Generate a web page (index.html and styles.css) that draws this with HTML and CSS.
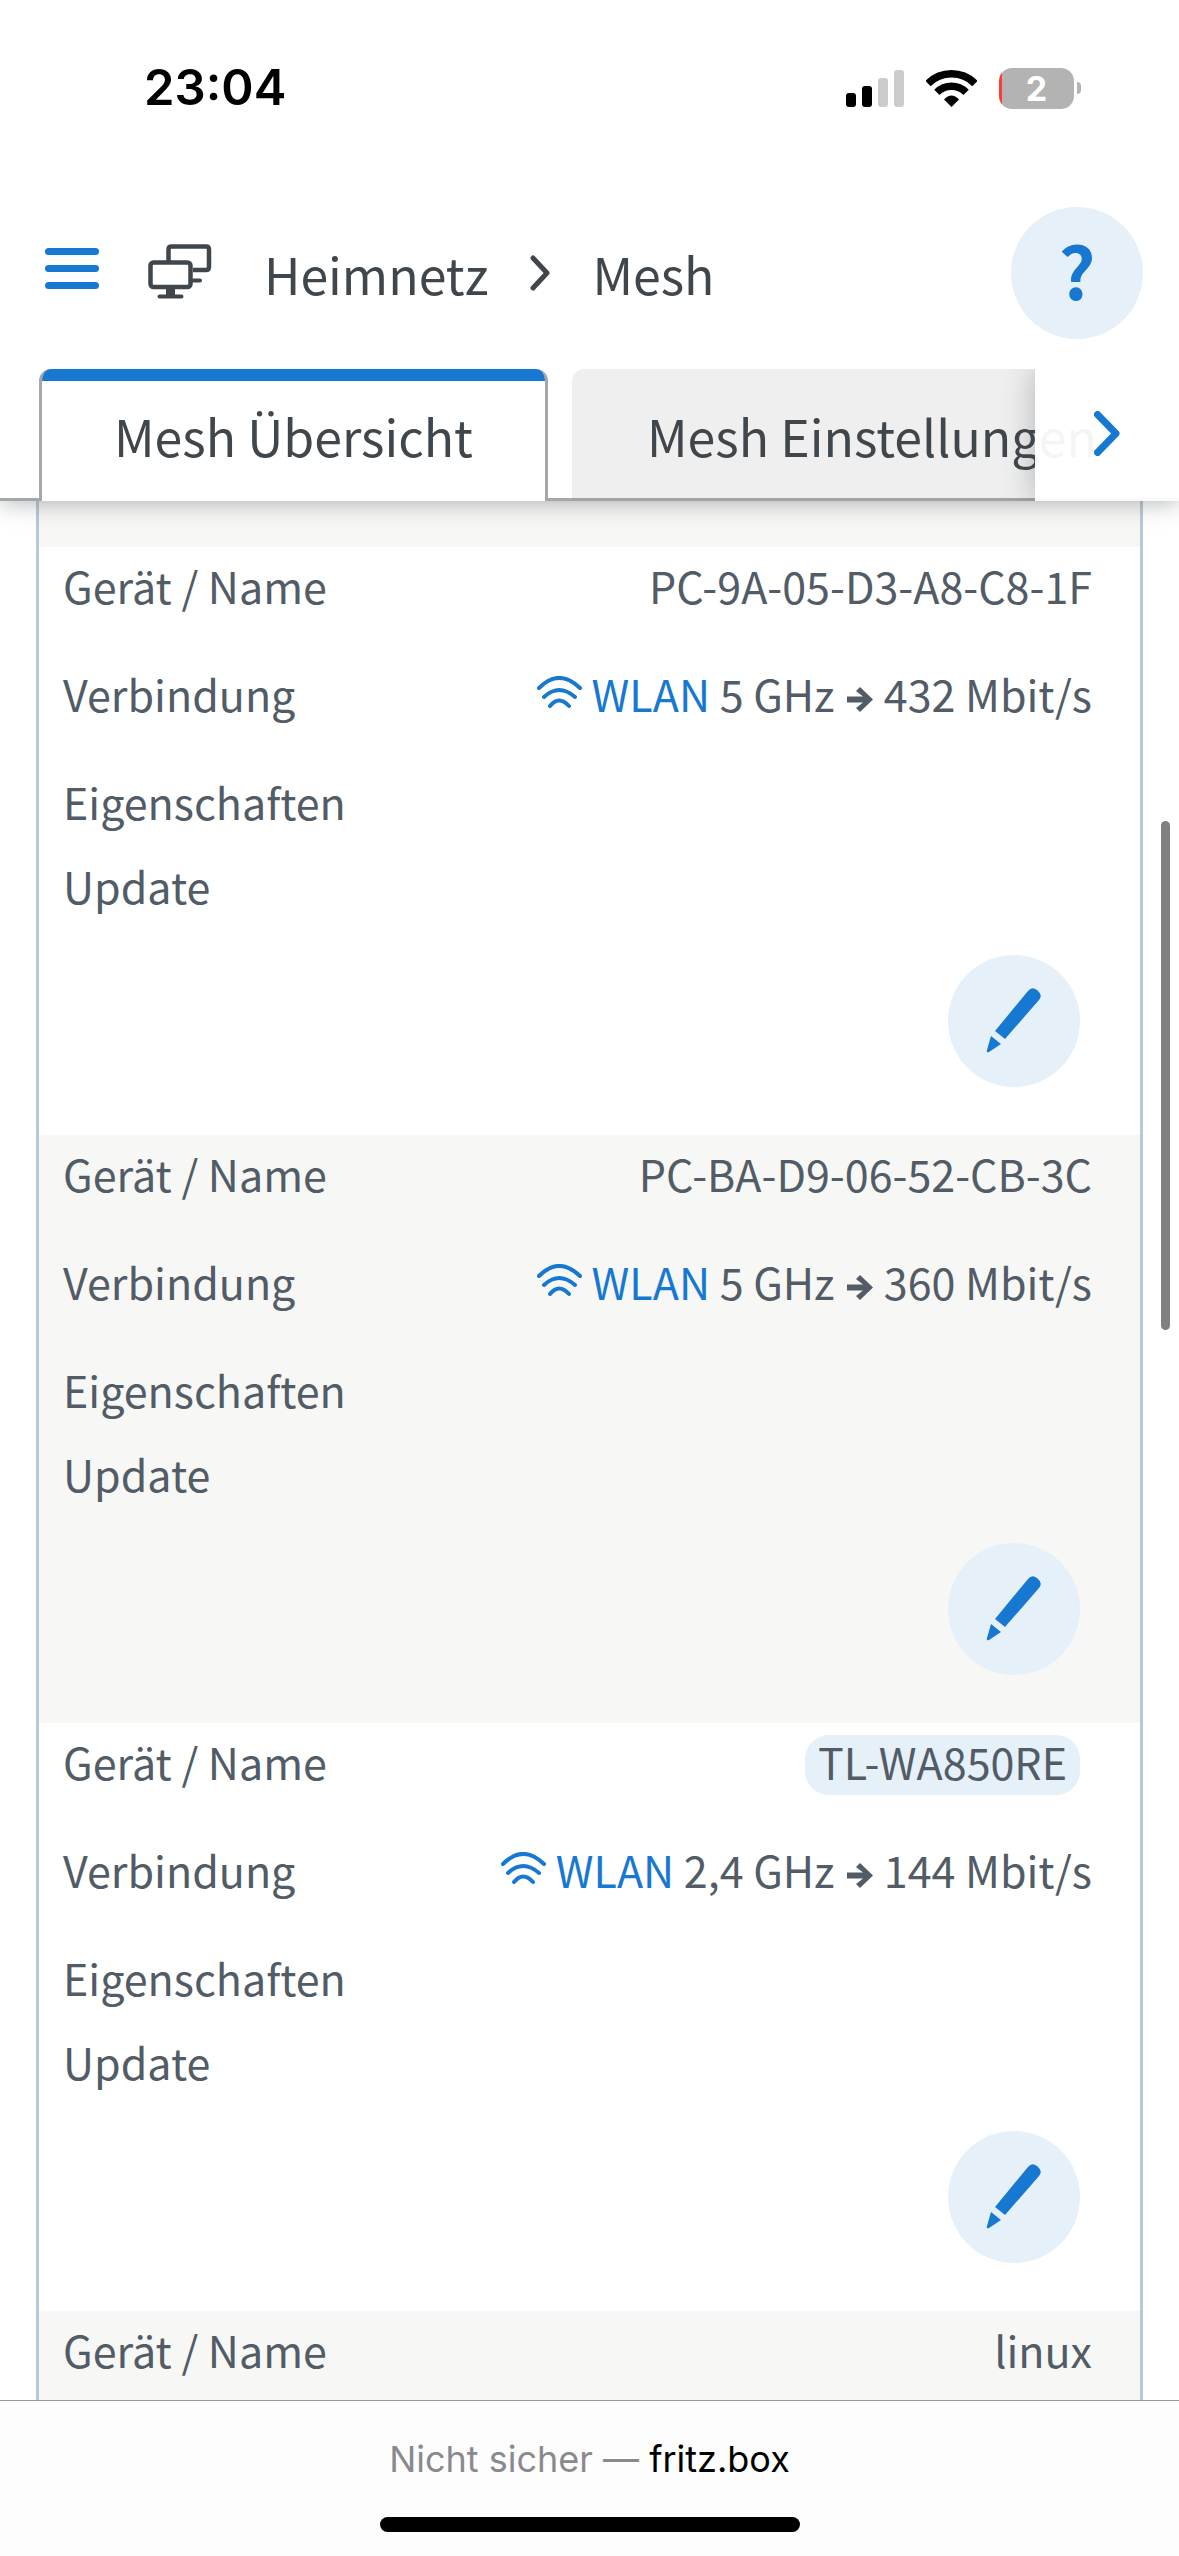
FILE: index.html
```html
<!DOCTYPE html>
<html lang="de">
<head>
<meta charset="utf-8">
<meta name="viewport" content="width=device-width, initial-scale=1">
<title>Heimnetz – Mesh</title>
<link rel="stylesheet" href="styles.css">
</head>
<body>
<svg width="0" height="0" class="sprite" aria-hidden="true">
  <symbol id="wlan" viewBox="0 0 45 36"><path d="M2 12Q22 -8 43 12M7 21Q22 7 38 21M13 30Q22 19 32 30" fill="none" stroke="currentColor" stroke-width="4" stroke-linecap="round"/></symbol>
  <symbol id="arrow" viewBox="0 0 27 25"><path d="M0 9.500H16L9 4 13 0 26 12.500 13 25 9 21 16 15.500H0z" fill="currentColor"/></symbol>
  <symbol id="pencil" viewBox="0 0 132 132"><path d="M47 76 80 36q4-5 9-1l1 1q5 4 1 9L57 84zM43 81 53 89 41 97Q38 98 39 95z" fill="currentColor"/></symbol>
</svg>

<div class="statusbar">
  <span class="clock">23:04</span>
  <div class="indicators">
    <svg width="58" height="37" viewBox="0 0 58 37"><rect y="23" width="10" height="14" rx="3"/><rect x="16" y="16" width="10" height="21" rx="3"/><g fill="#ccc"><rect x="32" y="8" width="10" height="29" rx="3"/><rect x="48" width="10" height="37" rx="3"/></g></svg>
    <svg width="51" height="37" viewBox="0 0 51 37"><g fill="none" stroke="#000" stroke-width="7.500"><path d="M2 13.500A33.200 33.200 0 0 1 49 13.500"/><path d="M10.900 22.400A20.600 20.600 0 0 1 40.100 22.400"/></g><path d="M18 29.500Q25.500 21.500 33 29.500L25.500 37z"/></svg>
    <div class="battery"><span class="battery-level">2</span></div>
  </div>
</div>

<header class="header">
  <div class="topbar">
    <button class="icon-button" type="button" aria-label="Menü">
      <svg width="54" height="41" viewBox="0 0 54 41" fill="currentColor"><rect width="54" height="7" rx="3.500"/><rect y="17" width="54" height="7" rx="3.500"/><rect y="34" width="54" height="7" rx="3.500"/></svg>
    </button>
    <svg class="section-icon" width="64" height="55" viewBox="0 0 64 55" fill="none" stroke="currentColor" stroke-width="4.500"><path d="M20.500 17V5.500q0-3 3-3H58q3 0 3 3V23q0 3-3 3H45"/><rect x="2.500" y="18.500" width="40" height="24.500" rx="3"/><path d="M22.500 44v8" stroke-width="9"/><path d="M11.500 52.500h22M45 36.500h7" stroke-linecap="round" stroke-width="4"/></svg>
    <nav class="breadcrumb" aria-label="Pfad">
      <a href="#heimnetz">Heimnetz</a>
      <svg width="20" height="36" viewBox="0 0 20 36" fill="none" stroke="currentColor" stroke-width="5" stroke-linecap="round" stroke-linejoin="round"><path d="M3 3 17 18 3 33"/></svg>
      <a href="#mesh">Mesh</a>
    </nav>
    <button class="round-button help" type="button" aria-label="Hilfe">?</button>
  </div>
  <nav class="tabs" aria-label="Mesh">
    <a class="tab tab-active" href="#uebersicht" aria-current="page">Mesh Übersicht</a>
    <a class="tab" href="#einstellungen">Mesh Einstellungen</a>
    <button class="tabs-next" type="button" aria-label="Weitere Reiter">
      <svg width="26" height="45" viewBox="0 0 26 45" fill="none" stroke="currentColor" stroke-width="7" stroke-linecap="round" stroke-linejoin="round"><path d="M3.500 3.500 22 22.500 3.500 41.500"/></svg>
    </button>
  </nav>
</header>

<main class="content">
  <div class="devices">
    <div class="device-end"></div>
    <section class="device">
      <dl class="fields">
        <div class="field"><dt>Gerät / Name</dt><dd>PC-9A-05-D3-A8-C8-1F</dd></div>
        <div class="field"><dt>Verbindung</dt><dd><a href="#wlan-1"><svg class="wlan"><use href="#wlan"/></svg> WLAN</a> 5 GHz <svg class="arrow"><use href="#arrow"/></svg> 432 Mbit/s</dd></div>
        <div class="field field-short"><dt>Eigenschaften</dt><dd></dd></div>
        <div class="field field-short"><dt>Update</dt><dd></dd></div>
      </dl>
      <button class="round-button edit" type="button" aria-label="Bearbeiten"><svg><use href="#pencil"/></svg></button>
    </section>
    <section class="device">
      <dl class="fields">
        <div class="field"><dt>Gerät / Name</dt><dd>PC-BA-D9-06-52-CB-3C</dd></div>
        <div class="field"><dt>Verbindung</dt><dd><a href="#wlan-2"><svg class="wlan"><use href="#wlan"/></svg> WLAN</a> 5 GHz <svg class="arrow"><use href="#arrow"/></svg> 360 Mbit/s</dd></div>
        <div class="field field-short"><dt>Eigenschaften</dt><dd></dd></div>
        <div class="field field-short"><dt>Update</dt><dd></dd></div>
      </dl>
      <button class="round-button edit" type="button" aria-label="Bearbeiten"><svg><use href="#pencil"/></svg></button>
    </section>
    <section class="device">
      <dl class="fields">
        <div class="field"><dt>Gerät / Name</dt><dd><span class="pill">TL-WA850RE</span></dd></div>
        <div class="field"><dt>Verbindung</dt><dd><a href="#wlan-3"><svg class="wlan"><use href="#wlan"/></svg> WLAN</a> 2,4 GHz <svg class="arrow"><use href="#arrow"/></svg> 144 Mbit/s</dd></div>
        <div class="field field-short"><dt>Eigenschaften</dt><dd></dd></div>
        <div class="field field-short"><dt>Update</dt><dd></dd></div>
      </dl>
      <button class="round-button edit" type="button" aria-label="Bearbeiten"><svg><use href="#pencil"/></svg></button>
    </section>
    <section class="device">
      <dl class="fields">
        <div class="field"><dt>Gerät / Name</dt><dd>linux</dd></div>
      </dl>
    </section>
  </div>
  <div class="scroll-thumb"></div>
</main>

<footer class="addressbar">
  <p class="address"><span class="insecure">Nicht sicher —</span> fritz.box</p>
  <div class="home-indicator"></div>
</footer>
</body>
</html>
```
FILE: styles.css
```css
* {
  box-sizing: border-box;
}

body {
  display: flex;
  flex-direction: column;
  height: 100vh;
  margin: 0;
  overflow: hidden;
  background: #fff;
  color: #525c66;
  font-family: "Noto Sans CJK SC", "Open Sans", sans-serif;
  font-size: 43px;
  line-height: 60px;
}

a {
  color: #1778d2;
  text-decoration: none;
}

button {
  padding: 0;
  border: 0;
  background: none;
  color: #1778d2;
  font-family: inherit;
}

svg {
  flex: none;
}

.sprite {
  position: absolute;
}

/* Status bar */
.statusbar {
  display: flex;
  flex: none;
  align-items: center;
  justify-content: space-between;
  height: 176px;
  padding: 0 98px 0 144px;
  color: #000;
  font-family: Inter, sans-serif;
}

.clock {
  font-size: 49px;
  font-weight: 600;
}

.indicators {
  display: flex;
  align-items: center;
  gap: 22px;
}

.battery {
  display: flex;
  align-items: center;
  gap: 3px;
}

.battery::after {
  width: 4px;
  height: 12px;
  border-radius: 0 4px 4px 0;
  background: #b3b3b3;
  content: "";
}

.battery-level {
  width: 75px;
  height: 41px;
  border-radius: 13px;
  background: linear-gradient(90deg, #ff3b30 3px, #b3b3b3 3px);
  color: #fff;
  font-size: 34px;
  font-weight: 700;
  line-height: 41px;
  text-align: center;
}

/* Header */
.header {
  position: relative;
  z-index: 1;
  flex: none;
  background: #fff;
  box-shadow: 0 0 24px rgba(63, 70, 76, 0.45);
  clip-path: inset(0 0 -40px 0);
  color: #3f464c;
  font-size: 50px;
}

.topbar {
  display: flex;
  align-items: center;
  padding: 31px 36px 30px 45px;
}

.icon-button {
  height: 41px;
  margin-bottom: 10px;
  line-height: 0;
}

.section-icon {
  margin: 0 52px 4px 49px;
}

.breadcrumb {
  display: flex;
  flex: 1;
  align-items: center;
  gap: 42px;
}

.breadcrumb a {
  color: inherit;
}

.round-button {
  width: 132px;
  height: 132px;
  border-radius: 50%;
  background: #e6f0f9;
}

.help {
  padding-bottom: 8px;
  font-size: 72px;
  font-weight: 700;
  line-height: 124px;
}

.tabs {
  position: relative;
  display: flex;
  gap: 24px;
  height: 132px;
  padding: 0 39px;
  overflow: hidden;
  background: linear-gradient(#a5a8ab, #a5a8ab) bottom / 100% 3px no-repeat;
}

.tab {
  flex: none;
  padding: 0 75px;
  border-bottom: 3px solid #a0a3a6;
  border-radius: 12px 12px 0 0;
  background: #efefef;
  color: inherit;
  line-height: 132px;
  white-space: nowrap;
}

.tab-active {
  padding: 0 72px;
  border: solid #a5a8ab;
  border-width: 0 3px;
  background: linear-gradient(#1778d2, #1778d2) top / 100% 12px no-repeat border-box, #fff;
}

.tabs-next {
  position: absolute;
  top: 0;
  right: 0;
  bottom: 0;
  display: flex;
  align-items: center;
  width: 144px;
  padding: 0 0 4px 59px;
  background: rgba(255, 255, 255, 0.95);
  box-shadow: 0 0 30px 0 rgba(63, 70, 76, 0.35);
}

/* Device list */
.content {
  position: relative;
  flex: 1;
  min-height: 0;
  padding: 0 36px;
  overflow: hidden;
}

.devices {
  border: solid #b9c9d4;
  border-width: 0 3px;
}

.device-end {
  height: 46px;
  background: #f7f7f5;
}

.device {
  display: flex;
  flex-direction: column;
  padding: 0 48px 48px 24px;
}

.device:nth-child(odd) {
  background: #f7f7f5;
}

.fields {
  margin: 0;
}

.field {
  display: flex;
  justify-content: space-between;
  padding: 8px 0 40px;
}

.field-short {
  padding-bottom: 16px;
}

.field dd {
  margin: 0;
  white-space: nowrap;
}

.wlan {
  width: 45px;
  height: 36px;
}

.arrow {
  width: 27px;
  height: 25px;
  margin-left: 3px;
}

.pill {
  display: inline-block;
  margin: 4px 12px -4px 0;
  padding: 0 13px 8px;
  border-radius: 24px;
  background: #e6f0f9;
  line-height: 52px;
  vertical-align: top;
}

.edit {
  align-self: flex-end;
  margin: 24px 12px 0 0;
}

.edit svg {
  display: block;
  width: 132px;
  height: 132px;
}

.scroll-thumb {
  position: absolute;
  top: 320px;
  right: 9px;
  width: 9px;
  height: 509px;
  border-radius: 5px;
  background: #808080;
}

/* Browser address bar */
.addressbar {
  display: flex;
  flex: none;
  flex-direction: column;
  align-items: center;
  gap: 28px;
  padding: 28px 0 24px;
  border-top: 1px solid #98989c;
  background: #fdfdfd;
  color: #000;
  font-family: Inter, sans-serif;
  font-size: 36px;
}

.address {
  margin: 0;
}

.insecure {
  color: #8a8a8e;
}

.home-indicator {
  width: 420px;
  height: 15px;
  border-radius: 8px;
  background: #000;
}
```
